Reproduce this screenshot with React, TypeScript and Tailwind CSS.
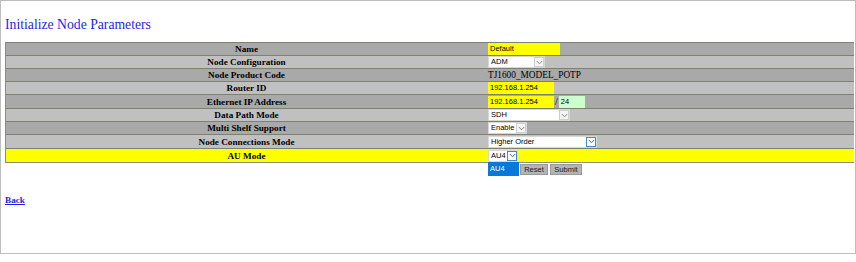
import React from "react";

function Chevron({ focus }: { focus?: boolean }) {
  return (
    <svg width="7" height="5" viewBox="0 0 7 5">
      <path
        d="M0.8 1 L3.5 3.8 L6.2 1"
        fill="none"
        stroke={focus ? "#3a6ea5" : "#8a8a8a"}
        strokeWidth="1"
      />
    </svg>
  );
}

function Select({ value, w, focus }: { value: string; w: string; focus?: boolean }) {
  return (
    <div
      className={`flex h-[12px] items-center border border-[#d8d8d8] bg-white font-['Liberation_Sans',Arial,sans-serif] text-[7.5px] leading-[10px] text-black ${w}`}
    >
      <span className="flex-1 pl-[2px]">{value}</span>
      <span
        className={
          focus
            ? "flex h-[10px] w-[10px] items-center justify-center border border-[#4a86c5] bg-white"
            : "flex h-[10px] w-[10px] items-center justify-center border border-[#cfcfcf] bg-[#f4f4f4]"
        }
      >
        <Chevron focus={focus} />
      </span>
    </div>
  );
}

function TextIn({ value, cls }: { value: string; cls: string }) {
  return (
    <div
      className={`flex h-[12px] items-center pl-[2px] font-['Liberation_Sans',Arial,sans-serif] text-[7.5px] leading-[10px] text-black ${cls}`}
    >
      {value}
    </div>
  );
}

type Row = { label: string; cls: string; cell: React.ReactNode };

export default function App() {
  const rows: Row[] = [
    { label: "Name", cls: "h-[13px] bg-[#a9a9a9]", cell: <TextIn value="Default" cls="w-[72px] bg-[#ffff00]" /> },
    { label: "Node Configuration", cls: "h-[13px] bg-[#c0c0c0]", cell: <Select value="ADM" w="w-[57px]" /> },
    {
      label: "Node Product Code",
      cls: "h-[13px] bg-[#a9a9a9]",
      cell: <span className="text-[9.3px] leading-[12px] text-black">TJ1600_MODEL_POTP</span>,
    },
    {
      label: "Router ID",
      cls: "h-[13px] bg-[#c0c0c0]",
      cell: <TextIn value="192.168.1.254" cls="w-[66px] bg-[#ffff00]" />,
    },
    {
      label: "Ethernet IP Address",
      cls: "h-[14px] bg-[#a9a9a9]",
      cell: (
        <div className="flex items-center">
          <TextIn value="192.168.1.254" cls="w-[66px] bg-[#ffff00]" />
          <span className="px-[1px] text-[10px] leading-[12px] text-black">/</span>
          <TextIn value="24" cls="w-[26px] bg-[#ccffcc]" />
        </div>
      ),
    },
    { label: "Data Path Mode", cls: "h-[13px] bg-[#c0c0c0]", cell: <Select value="SDH" w="w-[82px]" /> },
    { label: "Multi Shelf Support", cls: "h-[13px] bg-[#a9a9a9]", cell: <Select value="Enable" w="w-[39px]" /> },
    {
      label: "Node Connections Mode",
      cls: "h-[14px] bg-[#c0c0c0]",
      cell: <Select value="Higher Order" w="w-[109px]" focus />,
    },
    { label: "AU Mode", cls: "h-[14px] bg-[#ffff00]", cell: <Select value="AU4" w="w-[30px]" focus /> },
  ];

  return (
    <div className="relative h-[254px] w-[856px] border border-[#bdbdbd] bg-white font-['Liberation_Serif','Times_New_Roman',serif]">
      <h1 className="pl-[4px] pt-[16px] text-[13.7px] leading-[16px] text-[#1f1fe0]">
        Initialize Node Parameters
      </h1>
      <div className="ml-[4px] mt-[9px] w-[849px] border-b border-l border-[#8a9078]">
        {rows.map((r) => (
          <div key={r.label} className={`flex border-t border-[#7c8270] ${r.cls}`}>
            <div className="flex w-[481px] shrink-0 items-center justify-center text-[9.2px] font-bold leading-[12px] text-black">
              {r.label}
            </div>
            <div className="flex flex-1 items-center pl-[1px]">{r.cell}</div>
          </div>
        ))}
      </div>
      <div className="ml-[519px] mt-[1px] flex gap-[2px] font-['Liberation_Sans',Arial,sans-serif] text-[7.5px] leading-[9px] text-[#222]">
        <div className="flex h-[11px] w-[28px] items-center justify-center border border-[#9a9a9a] bg-[#b4b4b4]">
          Reset
        </div>
        <div className="flex h-[11px] w-[32px] items-center justify-center border border-[#9a9a9a] bg-[#b4b4b4]">
          Submit
        </div>
      </div>
      <div className="absolute left-[487px] top-[161px] flex h-[14px] w-[31px] items-center bg-[#0a78d7] pl-[2px] font-['Liberation_Sans',Arial,sans-serif] text-[7.5px] leading-[10px] text-white">
        AU4
      </div>
      <a
        href="#"
        className="ml-[4px] mt-[19px] block w-fit text-[9.2px] font-bold leading-[12px] text-[#1f1fe0] underline"
      >
        Back
      </a>
    </div>
  );
}
